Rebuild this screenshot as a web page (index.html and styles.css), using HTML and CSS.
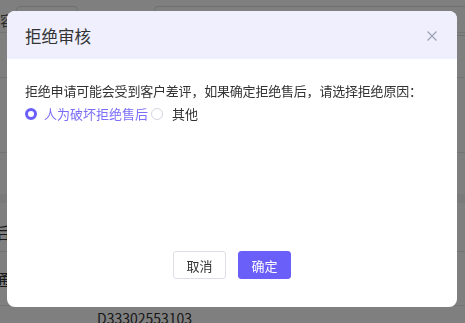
FILE: index.html
```html
<!DOCTYPE html>
<html lang="zh-CN">
<head>
    <meta charset="UTF-8">
    <title>拒绝审核</title>
    <link rel="stylesheet" href="styles.css">
</head>
<body>
    <div class="page">
        <div class="filter">
            <span class="filter-label">内容</span>
            <span class="filter-input short"></span>
            <span class="filter-input long"></span>
        </div>
        <div class="row r1"></div>
        <div class="row r2"></div>
        <div class="row r3"><span class="cell-side">后</span></div>
        <div class="row r4"><span class="cell-side">通</span></div>
        <div class="row r5"><span class="order">D33302553103</span></div>
    </div>

    <div class="mask"></div>
    <div class="dialog">
        <div class="dialog-head">
            <span class="dialog-title">拒绝审核</span>
            <span class="dialog-close">
                <svg width="10" height="10" viewBox="0 0 10 10"><path d="M0.5 0.5L9.5 9.5M9.5 0.5L0.5 9.5" stroke="#9aa0b4" stroke-width="1.1" fill="none"/></svg>
            </span>
        </div>
        <div class="dialog-body">
            <p class="tip">拒绝申请可能会受到客户差评，如果确定拒绝售后，请选择拒绝原因：</p>
            <div class="radios">
                <label class="radio checked"><span class="dot"></span><span class="radio-text">人为破坏拒绝售后</span></label>
                <label class="radio"><span class="dot"></span><span class="radio-text">其他</span></label>
            </div>
        </div>
        <div class="dialog-foot">
            <button class="btn">取消</button>
            <button class="btn primary">确定</button>
        </div>
    </div>
</body>
</html>
```

FILE: styles.css
```css
*{margin:0;padding:0;box-sizing:border-box;}
html,body{width:100%;height:100%;overflow:hidden;}
body{font-family:"Noto Sans CJK SC","Liberation Sans",sans-serif;background:#fff;color:#333;}

.page{width:100%;}
.filter{height:33px;display:flex;align-items:flex-start;padding-top:6px;border-bottom:1px solid #e8e8e8;}
.filter-label{font-size:14px;line-height:28px;margin-left:-14px;color:#555;}
.filter-input{height:30px;border:1px solid #dcdfe6;border-radius:4px;}
.filter-input.short{width:62px;margin-left:2px;}
.filter-input.long{flex:1;margin-left:76px;margin-right:-20px;}
.row{border-bottom:1px solid #e8e8e8;display:flex;align-items:center;}
.r1{height:45px;}
.r2{height:75px;}
.r3{height:99px;align-items:flex-end;padding-bottom:8px;background:linear-gradient(#fff 0,#fff 41px,#f5f5f5 41px,#f5f5f5 50px,#fff 50px);}
.r4{height:54px;}
.r5{height:17px;align-items:flex-start;border-bottom:0;}
.cell-side{font-size:16px;margin-left:-6px;line-height:22px;}
.order{font-size:14px;margin-left:97px;padding-top:3px;line-height:18px;}

.mask{position:fixed;left:0;top:0;right:0;bottom:0;background:rgba(0,0,0,0.5);}
.dialog{
    position:fixed;
    left:7px;
    top:11px;
    width:450px;
    height:296px;
    background:#fff;
    border-radius:8px;
    overflow:hidden;
    display:flex;
    flex-direction:column;
}
.dialog-head{
    height:48px;
    background:#efeffd;
    display:flex;
    align-items:center;
    justify-content:space-between;
    padding:2px 20px 0 18px;
}
.dialog-title{font-size:16.5px;color:#333;}
.dialog-close{display:flex;width:10px;height:10px;}
.dialog-body{flex:1;padding:22px 18px 0;}
.tip{font-size:13px;line-height:20px;color:#333;letter-spacing:-0.2px;}
.radios{display:flex;align-items:center;height:20px;margin-top:3px;}
.radio{display:flex;align-items:center;font-size:13px;line-height:20px;margin-right:3px;}
.radio .dot{width:12px;height:12px;border-radius:50%;border:1px solid #d2d5dc;margin-right:7px;background:#fff;}
.radio.checked .dot{border:3.5px solid #6b5ff9;background:#fff;}
.radio.checked .radio-text{color:#7b6ef8;}
.radio:last-child .dot{margin-right:9px;}
.dialog-foot{display:flex;justify-content:center;gap:12px;padding-bottom:28px;}
.btn{
    width:53px;
    height:28px;
    border:1px solid #dcdfe6;
    border-radius:3px;
    background:#fff;
    font-family:inherit;
    font-size:13px;
    color:#333;
}
.btn.primary{background:#6b5ff9;border-color:#6b5ff9;color:#fff;}
```
